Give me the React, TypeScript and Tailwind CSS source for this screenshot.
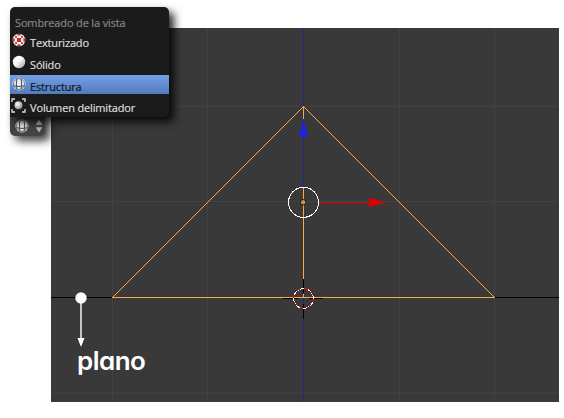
import React from "react";

function TextureIcon() {
  return (
    <svg width="14" height="14" viewBox="0 0 14 14">
      <circle cx="7" cy="7" r="6.3" fill="#eeeae8" />
      <g fill="#b5302a">
        <rect x="5" y="5" width="4" height="4" />
        <path d="M5.200 .9h3.600L8.400 2.600H5.600zM5.200 13.100h3.600L8.400 11.400H5.600zM.9 5.200v3.600L2.600 8.400V5.600zM13.100 5.200v3.600L11.400 8.400V5.600z" />
        <path d="M3 3l2 .2L4.800 5 3.200 4.800zM11 3l-2 .2L9.200 5l1.600-.2zM3 11l2-.2L4.800 9l-1.600.2zM11 11l-2-.2L9.200 9l1.600.2z" />
      </g>
    </svg>
  );
}

function SolidIcon() {
  return (
    <svg width="14" height="14" viewBox="0 0 14 14">
      <defs>
        <linearGradient id="ball" x1="0" y1="0" x2="1" y2="1">
          <stop offset=".45" stopColor="#fafafa" />
          <stop offset="1" stopColor="#999" />
        </linearGradient>
      </defs>
      <circle cx="7" cy="7" r="6.2" fill="url(#ball)" />
    </svg>
  );
}

function WireIcon({ line }: { line: string }) {
  return (
    <svg width="14" height="14" viewBox="0 0 14 14">
      <circle cx="7" cy="7" r="6.5" fill="#ededed" />
      <circle cx="7" cy="7" r="5.500" fill="none" stroke={line} strokeWidth=".7" />
      <g fill="none" stroke={line} strokeWidth="1">
        <path d="M5 1.300Q3.600 7 5 12.700M9 1.300Q10.400 7 9 12.700M1 8.800Q7 10 13 8.800" />
      </g>
    </svg>
  );
}

function BoundsIcon() {
  return (
    <svg width="15" height="15" viewBox="0 0 15 15">
      <defs>
        <radialGradient id="bound" cx=".35" cy=".35" r=".7">
          <stop offset="0" stopColor="#fff" />
          <stop offset="1" stopColor="#8d8d8d" />
        </radialGradient>
      </defs>
      <path d="M1 4V1h3M11 1H14v3M14 11V14h-3M4 14H1v-3" fill="none" stroke="#ddd" strokeWidth="1.300" />
      <circle cx="7.500" cy="7.200" r="4" fill="url(#bound)" />
    </svg>
  );
}

function Viewport() {
  return (
    <svg width="508" height="374" viewBox="51 28 508 374" shapeRendering="crispEdges" className="block bg-[#393939]">
      <path d="M112.500 28v374M207.500 28v374M399.500 28v374M494.500 28v374M51 106.500h508M51 201.500h508" stroke="#424242" />
      <path d="M51 393h508" stroke="#3e3e3e" strokeWidth="2" />
      <path d="M51 401.500h508" stroke="#403a3c" />
      <path d="M51 297.500h508" stroke="#000" />
      <path d="M303.500 28v374" stroke="#25258a" />
      <g fill="none" stroke="#f9a84a">
        <path d="M112 297.500h383M303.500 107v12M303.500 187v92" />
        <path d="M112.500 297.500L303.500 106.500L494.500 297.500" />
      </g>
      <path d="M303.500 119L308 137h-9z" fill="#2020e0" />
      <path d="M318 202.500h52" stroke="#e00000" />
      <path d="M369 198v9l17-4.500z" fill="#e00000" />
      <circle cx="303.500" cy="202.300" r="15" fill="none" stroke="#fff" />
      <circle cx="303.200" cy="202.300" r="2.800" fill="#d08f3c" stroke="#111" shapeRendering="auto" />
      <path d="M303.500 279v14M303.500 304v15M283 298.500h15M309 298.500h14" stroke="#000" />
      <path d="M303.500 294v4" stroke="#f9a84a" />
      <circle cx="303.500" cy="298.500" r="10" fill="none" stroke="#fff" />
      <circle cx="303.500" cy="298.500" r="10" fill="none" stroke="#f00000" strokeDasharray="3.930 3.930" />
      <g shapeRendering="auto" fill="#fff">
        <circle cx="81" cy="298" r="5.700" />
        <path d="M80.300 298h1.400v40h-1.400zM77.500 338h7L81 347z" />
      </g>
    </svg>
  );
}

export default function App() {
  return (
    <div className="relative h-[418px] w-[564px] overflow-hidden bg-white pt-7 pl-[51px]">
      <Viewport />
      <div className="absolute top-[344px] left-[77px] origin-left scale-x-[1.04] text-[25px] leading-[35px] font-semibold tracking-[-0.5px] text-white [font-family:Inter,sans-serif] [font-feature-settings:'cv11','ss03']">
        plano
      </div>
      <div className="absolute top-[110px] left-[10px] flex h-[26px] w-[35px] items-end justify-between rounded-b-[5px] bg-[#444] pr-[2px] pb-[3px] pl-[5px] shadow-[5px_5px_8px_rgba(0,0,0,0.75)]">
        <WireIcon line="#444" />
        <svg width="8" height="14" viewBox="0 0 8 14" fill="#b4b4b4">
          <path d="M4 .5l3.300 5.200H.700zM4 13.500L.700 8.300h6.600z" />
        </svg>
      </div>
      <div className="absolute top-[7px] left-[10px] h-[110px] w-[159px] rounded-t-[5px] rounded-br-[5px] bg-[#1b1b1b] pt-[5px] text-[11px] tracking-[-0.15px] text-[#dedede] shadow-[5px_5px_8px_rgba(0,0,0,0.85)] [-webkit-text-stroke:0.2px] [font-family:'Open_Sans','Noto_Sans',sans-serif]">
        <div className="h-[19px] pl-[5px] leading-[21px] text-[#868686]">Sombreado de la vista</div>
        <div className="flex h-[22px] gap-[4px] pl-[2px] leading-[24px]">
          <span className="pt-[2px]"><TextureIcon /></span><span>Texturizado</span>
        </div>
        <div className="flex h-[22px] gap-[4px] pl-[2px] leading-[24px]">
          <span className="pt-[2px]"><SolidIcon /></span><span>Sólido</span>
        </div>
        <div className="flex h-[19px] gap-[4px] bg-linear-to-b from-[#75a0e5] to-[#527abf] pl-[2px] leading-[23px] text-[#101722]">
          <span className="pt-[2px]"><WireIcon line="#3b4c66" /></span><span>Estructura</span>
        </div>
        <div className="flex h-[22px] gap-[4px] pl-[1px] leading-[28px]">
          <span className="pt-[4px]"><BoundsIcon /></span><span className="whitespace-nowrap">Volumen delimitador</span>
        </div>
      </div>
    </div>
  );
}
